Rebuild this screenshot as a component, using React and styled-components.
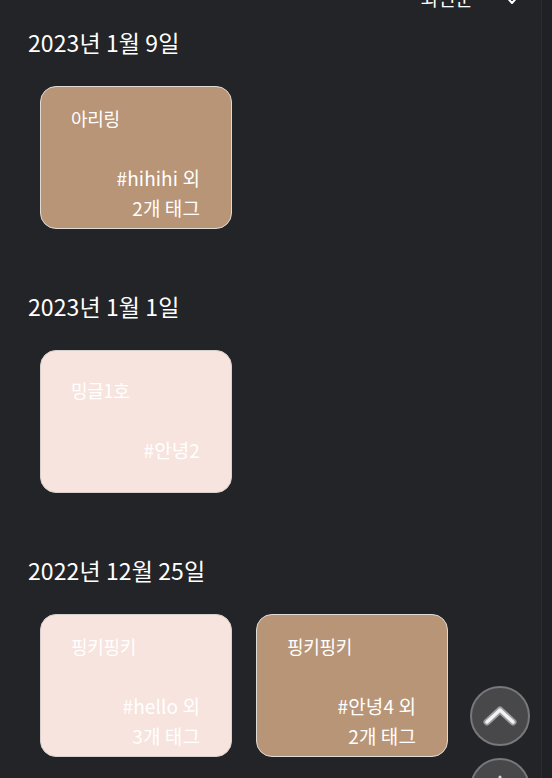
import React from "react";
import styled, { createGlobalStyle } from "styled-components";

const GlobalStyle = createGlobalStyle`
  html, body {
    margin: 0;
    padding: 0;
    background: #202124;
    overflow: hidden;
  }
  * { box-sizing: border-box; }
  body {
    font-family: "Noto Sans CJK KR", "Noto Sans", sans-serif;
    color: #ffffff;
  }
`;

const Page = styled.div`
  width: 542px;
  min-height: 778px;
  background: #232427;
  border-right: 1px solid #2a2b2e;
  display: flex;
  flex-direction: column;
  overflow: hidden;
`;

const SortBar = styled.div`
  height: 30px;
  margin-top: -18px;
  display: flex;
  align-items: center;
  justify-content: flex-end;
  gap: 33px;
  padding-right: 23px;
  font-size: 19px;
  color: #ffffff;
`;

const Feed = styled.div`
  margin-top: 14px;
  display: flex;
  flex-direction: column;
  gap: 61px;
`;

const Section = styled.section`
  display: flex;
  flex-direction: column;
  gap: 28px;
`;

const DateHeading = styled.h2`
  margin: 0;
  padding-left: 28px;
  font-size: 23px;
  line-height: 32px;
  font-weight: 400;
  letter-spacing: 0.1px;
  color: #ffffff;
`;

const CardRow = styled.div`
  display: flex;
  gap: 24px;
  padding-left: 40px;
`;

const Card = styled.div`
  width: 192px;
  height: 143px;
  border-radius: 16px;
  border: 1px solid ${(p) => (p.$tone === "tan" ? "#dedad6" : "#d8d0cd")};
  background: ${(p) => (p.$tone === "tan" ? "#b99578" : "#f7e4de")};
  padding: 11px 31px 0 30px;
  display: flex;
  flex-direction: column;
  justify-content: center;
  gap: 30px;
`;

const Title = styled.div`
  font-size: 18px;
  line-height: 30px;
  letter-spacing: -0.3px;
  color: #ffffff;
`;

const Tags = styled.div`
  min-height: 44px;
  display: flex;
  flex-direction: column;
  align-items: flex-end;
  font-size: 19px;
  line-height: 30px;
  letter-spacing: 0.1px;
  color: #ffffff;
`;

const TagLine = styled.span`
  display: block;
  white-space: nowrap;
`;

const FabStack = styled.div`
  position: fixed;
  left: 470px;
  top: 686px;
  display: flex;
  flex-direction: column;
  gap: 12px;
`;

const Fab = styled.button`
  width: 60px;
  height: 60px;
  border-radius: 50%;
  background: #48484b;
  border: 2px solid #77787b;
  padding: 0;
  display: flex;
  align-items: center;
  justify-content: center;
  cursor: pointer;
`;

const sections = [
  {
    date: "2023년 1월 9일",
    cards: [{ tone: "tan", title: "아리링", tags: ["#hihihi 외", "2개 태그"] }],
  },
  {
    date: "2023년 1월 1일",
    cards: [{ tone: "pink", title: "밍글1호", tags: ["#안녕2"] }],
  },
  {
    date: "2022년 12월 25일",
    cards: [
      { tone: "pink", title: "핑키핑키", tags: ["#hello 외", "3개 태그"] },
      { tone: "tan", title: "핑키핑키", tags: ["#안녕4 외", "2개 태그"] },
    ],
  },
];

function ChevronDown() {
  return (
    <svg width="12" height="20" viewBox="0 0 12 20">
      <path d="M1.5 11 L6 16 L10.5 11" fill="none" stroke="#fff" strokeWidth="2" strokeLinecap="round" strokeLinejoin="round" />
    </svg>
  );
}

function ChevronUp() {
  return (
    <svg width="34" height="22" viewBox="0 0 34 22">
      <path d="M4 17 L17 5 L30 17" fill="none" stroke="#9a9a9c" strokeWidth="7" strokeLinecap="round" strokeLinejoin="round" />
      <path d="M4 17 L17 5 L30 17" fill="none" stroke="#f2f2f2" strokeWidth="3.5" strokeLinecap="round" strokeLinejoin="round" />
    </svg>
  );
}

function Plus() {
  return (
    <svg width="30" height="30" viewBox="0 0 30 30">
      <path d="M15 4 V26 M4 15 H26" fill="none" stroke="#d0d0d0" strokeWidth="3" strokeLinecap="round" />
    </svg>
  );
}

export default function App() {
  return (
    <>
      <GlobalStyle />
      <Page>
        <SortBar>
          <span>최신순</span>
          <ChevronDown />
        </SortBar>
        <Feed>
          {sections.map((s) => (
            <Section key={s.date}>
              <DateHeading>{s.date}</DateHeading>
              <CardRow>
                {s.cards.map((c, i) => (
                  <Card key={i} $tone={c.tone}>
                    <Title>{c.title}</Title>
                    <Tags>
                      {c.tags.map((t) => (
                        <TagLine key={t}>{t}</TagLine>
                      ))}
                    </Tags>
                  </Card>
                ))}
              </CardRow>
            </Section>
          ))}
        </Feed>
      </Page>
      <FabStack>
        <Fab aria-label="맨 위로">
          <ChevronUp />
        </Fab>
        <Fab aria-label="추가">
          <Plus />
        </Fab>
      </FabStack>
    </>
  );
}
